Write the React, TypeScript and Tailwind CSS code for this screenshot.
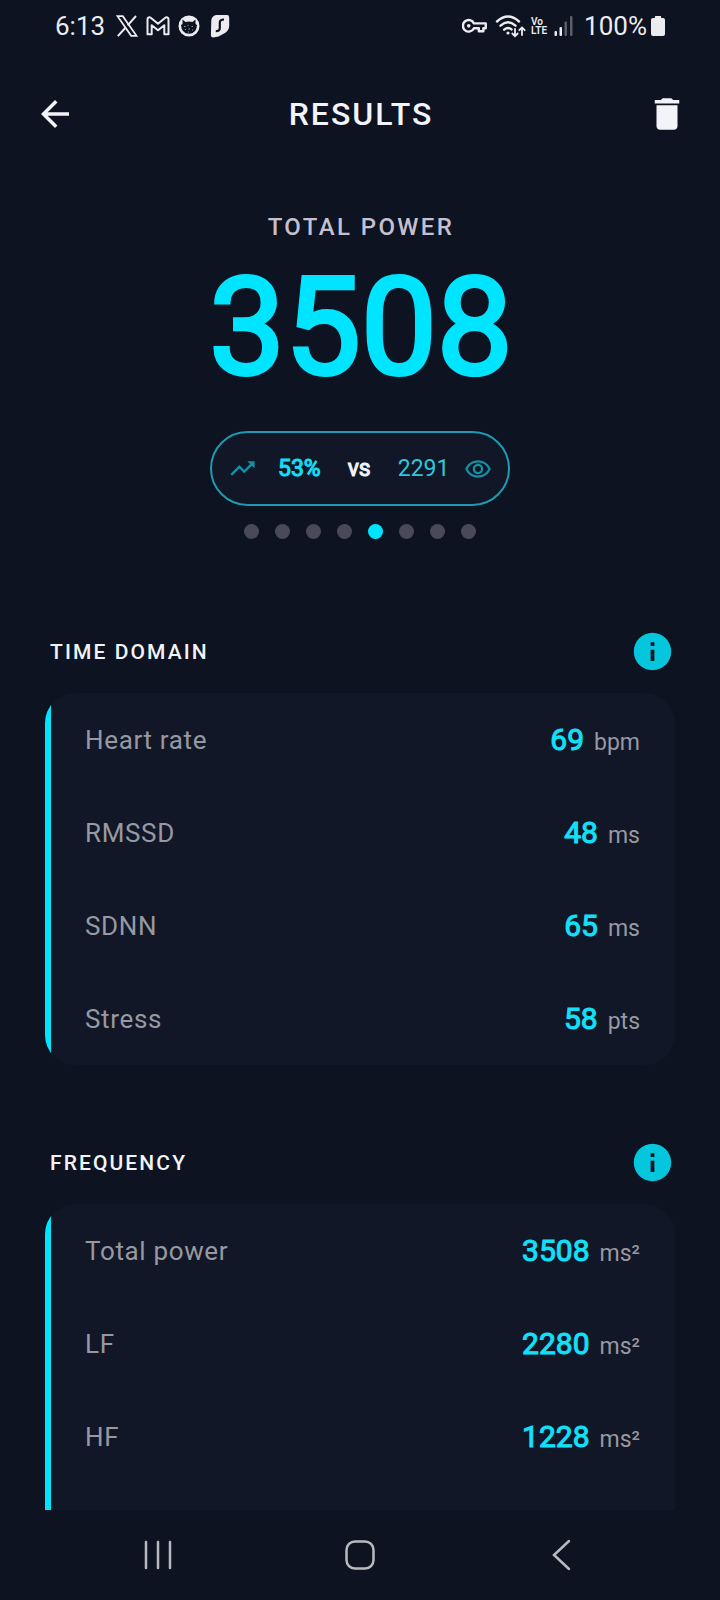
import { useState } from "react";
import { MdArrowBack, MdDelete, MdInfo, MdOutlineRemoveRedEye, MdTrendingUp } from "react-icons/md";

type Metric = { label: string; value: number; unit: string };

const TIME_DOMAIN: Metric[] = [
  { label: "Heart rate", value: 69, unit: "bpm" },
  { label: "RMSSD", value: 48, unit: "ms" },
  { label: "SDNN", value: 65, unit: "ms" },
  { label: "Stress", value: 58, unit: "pts" },
];

const FREQUENCY: Metric[] = [
  { label: "Total power", value: 3508, unit: "ms²" },
  { label: "LF", value: 2280, unit: "ms²" },
  { label: "HF", value: 1228, unit: "ms²" },
];

const PAGES = ["1", "2", "3", "4", "5", "6", "7", "8"];

function XIcon() {
  return (
    <svg width="22" height="22" viewBox="0 0 22 22" fill="none" stroke="currentColor" strokeWidth="1.8">
      <path d="M1.500 1.200h5.300L20.500 20.800h-5.300z" />
      <path d="M20 1l-8.300 9.300M9.700 12.500L1.800 21.200" strokeWidth="2" />
    </svg>
  );
}

function GmailIcon() {
  return (
    <svg width="24" height="20" viewBox="0 0 24 20" fill="none" stroke="currentColor" strokeWidth="2" strokeLinejoin="round">
      <path d="M1.500 3.200c0-1.800 2-2.400 3.200-1.400L12 7.800l7.300-6c1.200-1 3.200-.4 3.200 1.400V18.200h-4.200V9.200L12 14.200 5.700 9.200v9H1.500z" />
    </svg>
  );
}

function CatIcon() {
  return (
    <svg width="22" height="22" viewBox="0 0 22 22" fill="none">
      <circle cx="11" cy="11" r="10.500" fill="currentColor" />
      <path d="M4.500 4.500l3 2.500q3.500-1 7 0l3-2.500v4.500l1.500 1q-.5 8.500-8 8.800Q3.500 18.500 3 10l1.500-1z" fill="#0d1320" />
      <path d="M6 11.500h1.500M9.500 10.500h1M13.500 11.500H15M7 14.500h1M10.500 14h1.500M14 15h1M10 17h1" stroke="currentColor" strokeWidth="1" opacity=".6" />
    </svg>
  );
}

function SharkIcon() {
  return (
    <svg width="20" height="24" viewBox="0 0 20 24" fill="none">
      <path d="M6.500 1h10.500a2.200 2.200 0 0 1 2.200 2.200v8.300q0 4.500-3.800 7.200L8.500 22.600 3.200 23.400Q.8 23.600.9 21L1.300 6.500Q1.800 1.500 6.500 1z" fill="currentColor" />
      <path d="M14 5.500c-2.800 0-4.200.8-4.200 3.100v5.400c0 2.400-1.400 3.200-4 3.200" stroke="#0d1320" strokeWidth="2.200" />
    </svg>
  );
}

function KeyIcon() {
  return (
    <svg width="25" height="16" viewBox="0 0 26 16" fill="none" stroke="currentColor" strokeWidth="2.500" strokeLinejoin="round">
      <path d="M12.400 5.300h12.300v5h-2.500v3.200h-4.700v-3.200h-5.100A6 6 0 1 1 12.400 5.300z" />
      <circle cx="7" cy="7.800" r="1.900" fill="currentColor" stroke="none" />
    </svg>
  );
}

function WifiIcon() {
  return (
    <svg width="32" height="24" viewBox="0 0 32 24" fill="none" stroke="currentColor" strokeWidth="2.400" strokeLinecap="round">
      <path d="M2 7.500Q13 -2.500 24 7.500M5.500 11.700q7.500-6.700 15 0M9.200 15.700q3.800-3.200 7.300-.3" />
      <circle cx="13" cy="19" r="1.600" fill="currentColor" stroke="none" />
      <path d="M20 15v7M17.300 19.500l2.700 2.700 2.700-2.700M27 21v-7.500M24.300 16.200l2.700-2.700 2.700 2.700" strokeWidth="1.800" />
    </svg>
  );
}

function SignalIcon() {
  return (
    <svg width="20" height="20" viewBox="0 0 20 20" fill="currentColor">
      <rect x="0.500" y="15" width="2.500" height="5" rx="1" />
      <rect x="5.500" y="11" width="2.500" height="9" rx="1" />
      <rect x="10.500" y="5.500" width="2.500" height="14.500" rx="1" opacity=".35" />
      <rect x="16" y="0" width="2.500" height="20" rx="1" opacity=".35" />
    </svg>
  );
}

function BatteryIcon() {
  return (
    <svg width="14" height="20" viewBox="0 0 14 20" fill="currentColor">
      <path d="M4.500 0h5q.6 0 .6.600V2h2Q14 2 14 4v14q0 2-2 2H2q-2 0-2-2V4q0-2 2-2h1.900V.6q0-.6.600-.6z" />
    </svg>
  );
}

function StatusBar() {
  return (
    <div className="flex h-[52px] shrink-0 items-center justify-between px-[55px] text-[#ececf0]">
      <div className="flex items-center">
        <span className="text-[26px] leading-8">6:13</span>
        <span className="ml-[11px]"><XIcon /></span>
        <span className="ml-2"><GmailIcon /></span>
        <span className="ml-2"><CatIcon /></span>
        <span className="ml-2.5"><SharkIcon /></span>
      </div>
      <div className="flex items-center">
        <KeyIcon />
        <span className="ml-2"><WifiIcon /></span>
        <span className="ml-1 flex flex-col text-[10px] font-semibold leading-[9px]">
          <span>Vo</span>
          <span>LTE</span>
        </span>
        <span className="ml-[7px]"><SignalIcon /></span>
        <span className="ml-2.5 text-[26px] leading-8">100%</span>
        <span className="ml-1"><BatteryIcon /></span>
      </div>
    </div>
  );
}

function MetricSection({ title, metrics, listClass = "" }: { title: string; metrics: Metric[]; listClass?: string }) {
  return (
    <section className="flex shrink-0 flex-col px-[45px]">
      <div className="flex items-center justify-between">
        <h2 className="pl-[5px] text-[21px] font-medium leading-7 tracking-widest text-[#f2f3f8]">{title}</h2>
        <button aria-label={`About ${title}`} className="text-[#04c6dc]">
          <MdInfo size={45} />
        </button>
      </div>
      <div className="mt-[19px] flex overflow-hidden rounded-[30px] bg-[#111726]">
        <div className="w-1.5 shrink-0 bg-[#00e5ff]" />
        <dl className={`flex-1 pl-[34px] pr-[35px] ${listClass}`}>
          {metrics.map((m) => (
            <div key={m.label} className="flex h-[93px] items-center justify-between">
              <dt className="text-[26px] leading-8 tracking-wide text-[#9799a2]">{m.label}</dt>
              <dd className="flex items-baseline gap-2.5 pt-0.5">
                <span className="text-[30px] leading-9 text-[#12e0fa] [-webkit-text-stroke:1px]">{m.value}</span>
                <span className="text-[23px] leading-8 text-[#9799a2]">{m.unit}</span>
              </dd>
            </div>
          ))}
        </dl>
      </div>
    </section>
  );
}

export default function App() {
  const [page, setPage] = useState(4);

  return (
    <div className="flex h-screen flex-col bg-[#0d1320] font-[Roboto,sans-serif]">
      <StatusBar />

      <header className="mt-8 flex h-[60px] shrink-0 items-center justify-between pl-[34px] pr-8 text-[#f3f4f9]">
        <button aria-label="Back">
          <MdArrowBack size={42} />
        </button>
        <h1 className="text-[32px] font-medium leading-9 tracking-[2px]">RESULTS</h1>
        <button aria-label="Delete">
          <MdDelete size={42} />
        </button>
      </header>

      <main className="flex min-h-0 flex-1 flex-col overflow-hidden">
        {/* Headline figure */}
        <div className="mt-[67px] flex shrink-0 flex-col items-center">
          <div className="pl-0.5 text-center">
            <p className="text-[24px] font-medium leading-8 tracking-widest text-[#c5c0cf]">TOTAL POWER</p>
            <p className="mt-[13px] text-[135px] leading-[144px] text-[#00e5ff] [-webkit-text-stroke:4px]">3508</p>
          </div>

          <button className="mt-[31px] flex h-[75px] w-[300px] items-center rounded-full border-2 border-[#1f9bb1] bg-[#111726] px-4 text-[23px] leading-8">
            <MdTrendingUp size={29} className="text-[#148fa3]" />
            <span className="ml-[21px] text-[#12e0fa] [-webkit-text-stroke:1px]">53%</span>
            <span className="ml-[27px] text-[#f3f4f9] [-webkit-text-stroke:1px]">vs</span>
            <span className="ml-[27px] text-[#2fc6de]">2291</span>
            <MdOutlineRemoveRedEye size={28} className="ml-auto text-[#148fa3]" />
          </button>

          <div className="mt-[18px] flex gap-4">
            {PAGES.map((p, i) => (
              <button
                key={p}
                aria-label={`Page ${p}`}
                onClick={() => setPage(i)}
                className={`size-[15px] rounded-full ${i === page ? "bg-[#00e5ff]" : "bg-[#494a58]"}`}
              />
            ))}
          </div>
        </div>

        <div className="mt-[90px] flex flex-col gap-[75px]">
          <MetricSection title="TIME DOMAIN" metrics={TIME_DOMAIN} />
          <MetricSection title="FREQUENCY" metrics={FREQUENCY} listClass="pb-[93px]" />
        </div>
      </main>

      {/* System navigation */}
      <nav className="grid h-[90px] shrink-0 grid-cols-3 items-center px-[57px] text-[#b9bac0]">
        <button aria-label="Recent apps" className="justify-self-center">
          <svg width="30" height="30" viewBox="0 0 30 30" stroke="currentColor" strokeWidth="2.500" strokeLinecap="round">
            <path d="M3 2v26M15 2v26M27 2v26" />
          </svg>
        </button>
        <button aria-label="Home" className="justify-self-center">
          <svg width="30" height="30" viewBox="0 0 30 30" fill="none" stroke="currentColor" strokeWidth="2.500">
            <rect x="1.500" y="1.500" width="27" height="27" rx="8.500" />
          </svg>
        </button>
        <button aria-label="Go back" className="justify-self-center">
          <svg width="30" height="32" viewBox="0 0 30 32" fill="none" stroke="currentColor" strokeWidth="2.500" strokeLinecap="round">
            <path d="M22 2L7 16l15 14" />
          </svg>
        </button>
      </nav>
    </div>
  );
}
